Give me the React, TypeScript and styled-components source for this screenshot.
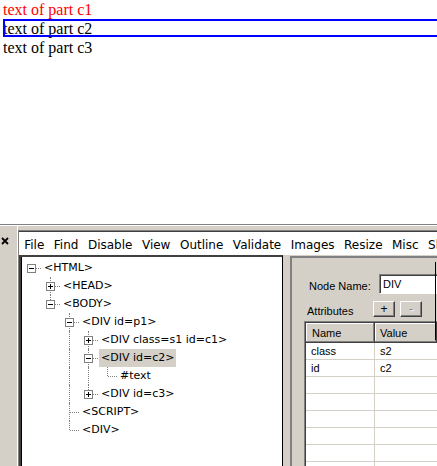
import React from 'react'
import styled, { createGlobalStyle, css } from 'styled-components'

const GlobalStyle = createGlobalStyle`
  html, body {
    margin: 0;
    padding: 0;
    background: #fff;
  }
  body {
    overflow: hidden;
  }
`

const Page = styled.div`
  width: 437px;
  height: 466px;
  overflow: hidden;
  display: flex;
  flex-direction: column;
`

const DocumentView = styled.div`
  height: 224px;
  flex-shrink: 0;
  padding-left: 3px;
  font-family: "Liberation Serif", "Times New Roman", serif;
  font-size: 16px;
  line-height: 19px;
`

const Part = styled.div<{ $color?: string; $selected?: boolean }>`
  position: relative;
  margin-right: -20px;
  color: ${p => p.$color ?? '#000'};
  ${p =>
    p.$selected &&
    css`
      &::after {
        content: '';
        position: absolute;
        left: 0;
        right: 0;
        top: 0;
        height: 18px;
        border: 2px solid #0000ff;
        box-sizing: border-box;
      }
    `}
`

const Inspector = styled.div`
  flex: 1;
  display: flex;
  background: #d4d0c8;
  border-top: 1px solid #808080;
  box-shadow: inset 0 1px 0 #fff;
  min-height: 0;
`

const CloseStrip = styled.div`
  width: 18px;
  flex-shrink: 0;
  box-sizing: border-box;
  border-right: 1px solid #fff;
  padding: 12px 0 0 1px;
`

const Frame = styled.div`
  flex: 1;
  min-width: 0;
  margin-top: 5px;
  display: flex;
  flex-direction: column;
  border-top: 1px solid #808080;
  border-left: 1px solid #808080;
  overflow: hidden;
`

const MenuBar = styled.div`
  height: 24px;
  box-sizing: border-box;
  flex-shrink: 0;
  display: flex;
  white-space: nowrap;
  background: #fff;
  border-top: 1px solid #404040;
  padding: 4px 0 0 0.5px;
  font-family: "DejaVu Sans", Verdana, sans-serif;
  font-size: 12px;
  line-height: 19px;
  color: #000;
`

const MenuItem = styled.span`
  padding: 0 4.75px;
  flex-shrink: 0;
`

const Panes = styled.div`
  flex: 1;
  display: flex;
  min-height: 0;
`

const TreePane = styled.div`
  width: 264px;
  flex-shrink: 0;
  box-sizing: border-box;
  background: #fff;
  border-top: 2px solid #404040;
  border-left: 2px solid #404040;
  border-right: 1px solid #000;
  box-shadow: inset 1px 0 0 #000;
  padding: 2px 0 0 1px;
  overflow: hidden;
  font-family: "DejaVu Sans", Verdana, sans-serif;
  font-size: 11px;
  line-height: 18px;
  color: #000;
`

const TreeRow = styled.div`
  display: flex;
  height: 18px;
  white-space: nowrap;
`

type Guide = 'none' | 'pipe' | 'tee' | 'elbow' | 'stub'

const dotted = '1px dotted #808080'

const GuideCell = styled.span<{ $kind: Guide }>`
  position: relative;
  width: 19px;
  flex-shrink: 0;

  &::before {
    content: '';
    position: absolute;
    left: 9px;
    top: 0;
    border-left: ${dotted};
    display: ${p => (p.$kind === 'pipe' || p.$kind === 'tee' || p.$kind === 'elbow' ? 'block' : 'none')};
    height: ${p => (p.$kind === 'elbow' ? '9px' : '18px')};
  }

  &::after {
    content: '';
    position: absolute;
    left: 10px;
    right: 0;
    top: 9px;
    border-top: ${dotted};
    display: ${p => (p.$kind === 'tee' || p.$kind === 'elbow' || p.$kind === 'stub' ? 'block' : 'none')};
  }
`

const Expander = styled.span<{ $open: boolean }>`
  position: absolute;
  left: 5px;
  top: 5px;
  width: 9px;
  height: 9px;
  box-sizing: border-box;
  border: 1px solid #808080;
  background: #fff;
  z-index: 1;

  &::before {
    content: '';
    position: absolute;
    left: 1px;
    top: 3px;
    width: 5px;
    height: 1px;
    background: #000;
  }

  &::after {
    content: '';
    position: absolute;
    left: 3px;
    top: 1px;
    width: 1px;
    height: 5px;
    background: #000;
    display: ${p => (p.$open ? 'none' : 'block')};
  }
`

const NodeLabel = styled.span<{ $selected?: boolean }>`
  margin-left: 1px;
  padding: 0 2px;
  background: ${p => (p.$selected ? '#d4d0c8' : 'transparent')};
`

const Splitter = styled.div`
  width: 7px;
  flex-shrink: 0;
`

const DetailPane = styled.div`
  flex: 1;
  position: relative;
  margin-top: 1px;
  padding-top: 16px;
  border-top: 2px solid #808080;
  border-left: 2px solid #808080;
  font-family: "Liberation Sans", Arial, sans-serif;
  font-size: 11px;
  color: #000;
  overflow: hidden;
`

const EdgeLine = styled.div`
  position: absolute;
  left: 143px;
  top: 4px;
  width: 1px;
  height: 78px;
  background: #000;
`

const FieldRow = styled.div<{ $indent: number; $height: number }>`
  display: flex;
  align-items: center;
  height: ${p => p.$height}px;
  padding-left: ${p => p.$indent}px;
  white-space: nowrap;
`

const FieldLabel = styled.span<{ $width: number }>`
  width: ${p => p.$width}px;
  flex-shrink: 0;
  padding-top: 4px;
`

const TextBox = styled.div`
  width: 120px;
  height: 20px;
  flex-shrink: 0;
  box-sizing: border-box;
  background: #fff;
  border-top: 1px solid #808080;
  border-left: 1px solid #808080;
  border-right: 1px solid #fff;
  border-bottom: 1px solid #fff;
  box-shadow: inset 1px 1px 0 #404040;
  padding: 2px 0 0 3px;
  line-height: 15px;
`

const Button = styled.div<{ $disabled?: boolean }>`
  width: 22px;
  height: 16px;
  flex-shrink: 0;
  box-sizing: border-box;
  margin-right: 5px;
  display: flex;
  align-items: center;
  justify-content: center;
  background: #d4d0c8;
  border-top: 1px solid #fff;
  border-left: 1px solid #fff;
  border-right: 1px solid #404040;
  border-bottom: 1px solid #404040;
  box-shadow: inset -1px -1px 0 #808080;
  font-size: 12px;
  color: ${p => (p.$disabled ? '#808080' : '#000')};
  text-shadow: ${p => (p.$disabled ? '1px 1px 0 #fff' : 'none')};
`

const AttrTable = styled.div`
  margin: 4px 0 0 12px;
  border-top: 1px solid #808080;
  border-left: 1px solid #808080;
  background: #fff;
`

const AttrTableInner = styled.div`
  border-top: 1px solid #404040;
  border-left: 1px solid #404040;
`

const HeaderRow = styled.div`
  display: flex;
  height: 20px;
`

const HeaderCell = styled.div<{ $width?: number; $pad: number }>`
  ${p => (p.$width ? `width: ${p.$width}px; flex-shrink: 0;` : 'flex: 1;')}
  box-sizing: border-box;
  background: #d4d0c8;
  border-right: 1px solid #404040;
  border-bottom: 1px solid #404040;
  box-shadow: inset -1px -1px 0 #808080, inset 1px 1px 0 #fff;
  padding: 1px 0 0 ${p => p.$pad}px;
  line-height: 19px;
`

const DataRow = styled.div`
  display: flex;
  height: 17px;
  box-sizing: border-box;
  border-bottom: 1px solid #d4d0c8;
`

const DataCell = styled.div<{ $width?: number }>`
  ${p => (p.$width ? `width: ${p.$width}px; flex-shrink: 0; border-right: 1px solid #d4d0c8;` : 'flex: 1;')}
  box-sizing: border-box;
  padding-left: 5px;
  line-height: 16px;
`

const CloseIcon = () => (
  <svg width="8" height="8" viewBox="0 0 8 8" style={{ display: 'block' }}>
    <path d="M1 1 L7 7 M7 1 L1 7" stroke="#000" strokeWidth="1.8" />
  </svg>
)

type TreeNode = {
  label: string
  guides: Guide[]
  box?: 'open' | 'closed'
  selected?: boolean
}

const nodes: TreeNode[] = [
  { label: '<HTML>', guides: ['stub'], box: 'open' },
  { label: '<HEAD>', guides: ['none', 'tee'], box: 'closed' },
  { label: '<BODY>', guides: ['none', 'elbow'], box: 'open' },
  { label: '<DIV id=p1>', guides: ['none', 'none', 'tee'], box: 'open' },
  { label: '<DIV class=s1 id=c1>', guides: ['none', 'none', 'pipe', 'tee'], box: 'closed' },
  { label: '<DIV id=c2>', guides: ['none', 'none', 'pipe', 'tee'], box: 'open', selected: true },
  { label: '#text', guides: ['none', 'none', 'pipe', 'pipe', 'elbow'] },
  { label: '<DIV id=c3>', guides: ['none', 'none', 'pipe', 'elbow'], box: 'closed' },
  { label: '<SCRIPT>', guides: ['none', 'none', 'tee'] },
  { label: '<DIV>', guides: ['none', 'none', 'elbow'] },
]

const menu = ['File', 'Find', 'Disable', 'View', 'Outline', 'Validate', 'Images', 'Resize', 'Misc', 'Show']

const attributes = [
  { name: 'class', value: 's2' },
  { name: 'id', value: 'c2' },
]

export default function App() {
  const rows = [...attributes, ...Array.from({ length: 6 }, () => ({ name: '', value: '' }))]

  return (
    <Page>
      <GlobalStyle />
      <DocumentView>
        <Part $color="#ff0000">text of part c1</Part>
        <Part $selected>text of part c2</Part>
        <Part>text of part c3</Part>
      </DocumentView>

      <Inspector>
        <CloseStrip>
          <CloseIcon />
        </CloseStrip>
        <Frame>
          <MenuBar>
            {menu.map(m => (
              <MenuItem key={m}>{m}</MenuItem>
            ))}
          </MenuBar>
          <Panes>
            <TreePane>
              {nodes.map((n, i) => (
                <TreeRow key={i}>
                  {n.guides.map((g, j) => (
                    <GuideCell key={j} $kind={g}>
                      {j === n.guides.length - 1 && n.box && <Expander $open={n.box === 'open'} />}
                    </GuideCell>
                  ))}
                  <NodeLabel $selected={n.selected}>{n.label}</NodeLabel>
                </TreeRow>
              ))}
            </TreePane>
            <Splitter />
            <DetailPane>
              <FieldRow $indent={17} $height={20}>
                <FieldLabel $width={70}>Node Name:</FieldLabel>
                <TextBox>DIV</TextBox>
              </FieldRow>
              <FieldRow $indent={15} $height={16} style={{ marginTop: 7 }}>
                <FieldLabel $width={66}>Attributes</FieldLabel>
                <Button>+</Button>
                <Button $disabled>-</Button>
              </FieldRow>
              <AttrTable>
                <AttrTableInner>
                  <HeaderRow>
                    <HeaderCell $width={69} $pad={6}>Name</HeaderCell>
                    <HeaderCell $pad={5}>Value</HeaderCell>
                  </HeaderRow>
                  {rows.map((r, i) => (
                    <DataRow key={i}>
                      <DataCell $width={69}>{r.name}</DataCell>
                      <DataCell>{r.value}</DataCell>
                    </DataRow>
                  ))}
                </AttrTableInner>
              </AttrTable>
              <EdgeLine />
            </DetailPane>
          </Panes>
        </Frame>
      </Inspector>
    </Page>
  )
}
